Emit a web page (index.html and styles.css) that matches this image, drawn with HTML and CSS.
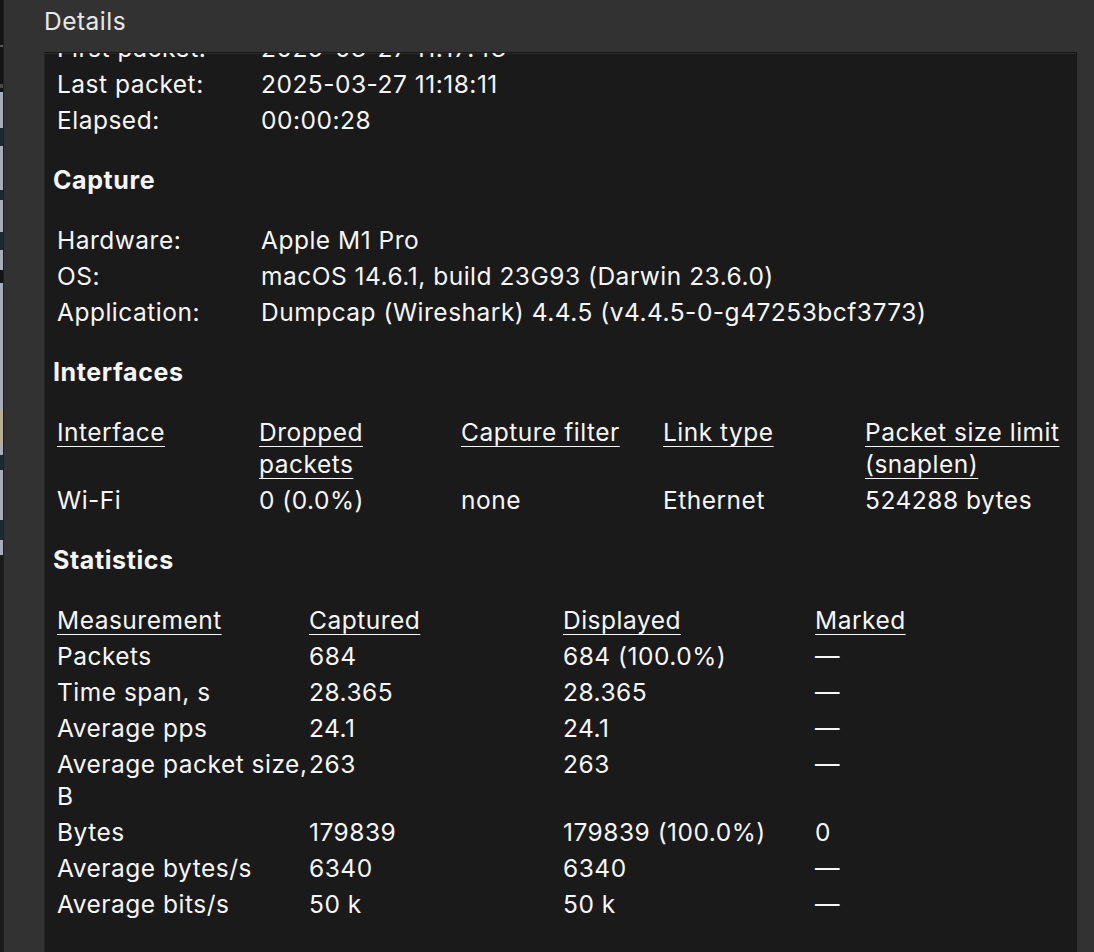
FILE: index.html
```html
<!DOCTYPE html>
<html lang="en">
<head>
<meta charset="utf-8">
<title>Capture File Properties</title>
<link rel="stylesheet" href="styles.css">
</head>
<body>
<div class="window">
  <div class="edge"></div>
  <div class="main">
    <div class="title">Details</div>
    <div class="panel">
      <div class="content">
        <div class="kv first">
          <div class="cell">First packet:</div><div class="cell">2025-03-27 11:17:43</div>
          <div class="cell">Last packet:</div><div class="cell">2025-03-27 11:18:11</div>
          <div class="cell">Elapsed:</div><div class="cell">00:00:28</div>
        </div>

        <h3 class="section">Capture</h3>
        <div class="kv">
          <div class="cell">Hardware:</div><div class="cell">Apple M1 Pro</div>
          <div class="cell">OS:</div><div class="cell">macOS 14.6.1, build 23G93 (Darwin 23.6.0)</div>
          <div class="cell">Application:</div><div class="cell">Dumpcap (Wireshark) 4.4.5 (v4.4.5-0-g47253bcf3773)</div>
        </div>

        <h3 class="section">Interfaces</h3>
        <div class="grid ifaces">
          <div class="cell head"><u>Interface</u></div>
          <div class="cell head"><u>Dropped<br>packets</u></div>
          <div class="cell head"><u>Capture filter</u></div>
          <div class="cell head"><u>Link type</u></div>
          <div class="cell head"><u>Packet size limit<br>(snaplen)</u></div>
          <div class="cell">Wi-Fi</div>
          <div class="cell">0 (0.0%)</div>
          <div class="cell">none</div>
          <div class="cell">Ethernet</div>
          <div class="cell">524288 bytes</div>
        </div>

        <h3 class="section">Statistics</h3>
        <div class="grid stats">
          <div class="cell head"><u>Measurement</u></div>
          <div class="cell head"><u>Captured</u></div>
          <div class="cell head"><u>Displayed</u></div>
          <div class="cell head"><u>Marked</u></div>

          <div class="cell">Packets</div><div class="cell">684</div><div class="cell">684 (100.0%)</div><div class="cell">—</div>
          <div class="cell">Time span, s</div><div class="cell">28.365</div><div class="cell">28.365</div><div class="cell">—</div>
          <div class="cell">Average pps</div><div class="cell">24.1</div><div class="cell">24.1</div><div class="cell">—</div>
          <div class="cell">Average packet size,<br>B</div><div class="cell">263</div><div class="cell">263</div><div class="cell">—</div>
          <div class="cell">Bytes</div><div class="cell">179839</div><div class="cell">179839 (100.0%)</div><div class="cell">0</div>
          <div class="cell">Average bytes/s</div><div class="cell">6340</div><div class="cell">6340</div><div class="cell">—</div>
          <div class="cell">Average bits/s</div><div class="cell">50 k</div><div class="cell">50 k</div><div class="cell">—</div>
        </div>
      </div>
    </div>
  </div>
</div>
</body>
</html>
```

FILE: styles.css
```css
html, body {
  margin: 0;
  padding: 0;
  background: #323232;
}

body {
  font-family: Inter, "Noto Sans", "Liberation Sans", sans-serif;
  color: #f6f6f6;
  font-size: 24.5px;
  letter-spacing: 0.5px;
}

.window {
  display: flex;
  height: 952px;
  overflow: hidden;
}

.edge {
  flex: none;
  width: 3px;
  border-right: 1px solid #1f1f1f;
  background: linear-gradient(to bottom,
    #141414 0, #141414 45px,
    #5a5a5a 45px, #5a5a5a 47px,
    #141414 47px, #141414 84px,
    #4a4a4a 84px, #4a4a4a 88px,
    #141414 88px, #141414 92px,
    #a9acb9 92px, #a9acb9 128px,
    #1d2a33 128px, #1d2a33 146px,
    #a9acb9 146px, #a9acb9 190px,
    #1d2a33 190px, #1d2a33 200px,
    #a9acb9 200px, #a9acb9 232px,
    #1d2a33 232px, #1d2a33 250px,
    #a9acb9 250px, #a9acb9 270px,
    #141414 270px, #141414 283px,
    #a9acb9 283px, #a9acb9 410px,
    #b8ad95 410px, #b8ad95 445px,
    #a9acb9 445px, #a9acb9 455px,
    #1d2a33 455px, #1d2a33 470px,
    #a9acb9 470px, #a9acb9 520px,
    #1d2a33 520px, #1d2a33 540px,
    #a9acb9 540px, #a9acb9 555px,
    #1b1b1b 555px, #1b1b1b 100%);
}

.main {
  flex: 1;
  display: flex;
  flex-direction: column;
  padding: 0 17px 0 40px;
  min-width: 0;
}

.title {
  flex: none;
  height: 52px;
  line-height: 42px;
  color: #e8e8e8;
  font-size: 24.5px;
}

.panel {
  flex: 1;
  background: #1a1a1a;
  border: 1px solid #161616;
  border-left-color: #262626;
  border-bottom: none;
  box-shadow: inset 0 1px 0 #2b2b2b;
  overflow: hidden;
}

.content {
  padding: 0 8px;
}

.first {
  margin-top: -23px;
}

.section {
  margin: 26px 0;
  font-size: 25px;
  letter-spacing: 0.6px;
  line-height: 32px;
  font-weight: 700;
}

.kv,
.grid {
  display: grid;
  margin-left: 2px;
}

.kv {
  grid-template-columns: 204px 1fr;
}

.ifaces {
  grid-template-columns: 202px 202px 202px 202px 1fr;
}

.stats {
  grid-template-columns: 252px 254px 252px 1fr;
}

.cell {
  padding: 2px;
  line-height: 32px;
  white-space: nowrap;
}

.head u {
  text-decoration: underline;
  text-decoration-thickness: 1px;
  text-underline-offset: 5px;
}
```
